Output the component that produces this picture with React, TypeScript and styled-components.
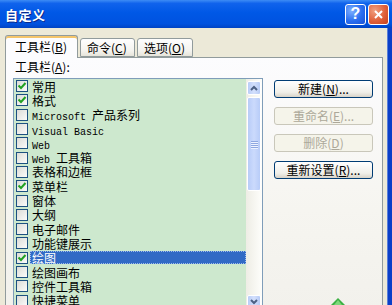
import React from "react";
import styled, { createGlobalStyle } from "styled-components";

const GlobalStyle = createGlobalStyle`
    html, body {
        margin: 0;
        padding: 0;
        overflow: hidden;
        background: #0a4fd8;
    }
`;

const UI_FONT = `"Noto Sans CJK SC", "Liberation Sans", sans-serif`;

const Window = styled.div`
    width: 392px;
    height: 305px;
    display: flex;
    flex-direction: column;
    overflow: hidden;
    position: relative;
    font-family: ${UI_FONT};
    font-size: 12px;
    color: #000;
`;

const TitleBar = styled.div`
    height: 28px;
    flex: none;
    display: flex;
    align-items: center;
    padding: 0 3px 0 5px;
    background: linear-gradient(
        #3d8cf5 0%,
        #1063ec 12%,
        #0058e6 45%,
        #0052df 85%,
        #0043c4 100%
    );
`;

const Title = styled.div`
    flex: 1;
    color: #fff;
    font-weight: bold;
    font-size: 13px;
    letter-spacing: 0.5px;
    text-shadow: 1px 1px 0 #0a2a8a;
`;

const CaptionButton = styled.div<{ $red?: boolean }>`
    width: 21px;
    height: 21px;
    box-sizing: border-box;
    margin-left: 2px;
    border: 1px solid #fff;
    border-radius: 3px;
    display: flex;
    align-items: center;
    justify-content: center;
    background: ${(p) =>
        p.$red
            ? "radial-gradient(circle at 30% 30%, #f0a080, #e0613a 55%, #c8401c)"
            : "radial-gradient(circle at 30% 30%, #7fb0ff, #2a6ef0 55%, #1a52d6)"};
    color: #fff;
    font-family: "Liberation Sans", sans-serif;
    font-weight: bold;
    font-size: 16px;
`;

const Body = styled.div`
    flex: 1;
    display: flex;
    flex-direction: column;
    background: #ece9d8;
    padding: 7px 0 0 5px;
    border-right: 4px solid #0a3fc8;
    box-shadow: inset -1px 0 0 #5a7fd8;
`;

const TabBar = styled.div`
    display: flex;
    align-items: flex-end;
    height: 22px;
    position: relative;
    z-index: 1;
`;

const Tab = styled.div<{ $active?: boolean; $w: number }>`
    width: ${(p) => p.$w}px;
    height: ${(p) => (p.$active ? 23 : 19)}px;
    box-sizing: border-box;
    margin-right: 2px;
    margin-bottom: ${(p) => (p.$active ? -1 : 0)}px;
    border: 1px solid #919b9c;
    border-bottom: ${(p) => (p.$active ? "none" : "1px solid #919b9c")};
    border-radius: 3px 3px 0 0;
    background: ${(p) =>
        p.$active ? "#fcfcfe" : "linear-gradient(#fefefe, #f4f3ee 70%, #e6e4da)"};
    box-shadow: ${(p) => (p.$active ? "inset 0 2px 0 #f5c56a" : "none")};
    padding-left: ${(p) => (p.$active ? 9 : 6)}px;
    display: flex;
    align-items: center;
    line-height: 1;
`;

const U = styled.span`
    text-decoration: underline;
`;

const Panel = styled.div`
    width: 378px;
    flex: 1;
    box-sizing: border-box;
    border: 1px solid #919b9c;
    border-bottom: none;
    background: linear-gradient(#fcfcfe, #f6f5f0 60%, #f2f1ec);
    padding: 2px 0 0 7px;
`;

const FieldLabel = styled.div`
    height: 14px;
    line-height: 14px;
    margin: 0 0 4px 2px;
`;

const Content = styled.div`
    display: flex;
    gap: 11px;
`;

const ListBox = styled.div`
    width: 250px;
    height: 232px;
    box-sizing: border-box;
    border: 1px solid #7f9db9;
    display: flex;
    background: #cde8ce;
`;

const Rows = styled.div`
    flex: 1;
`;

const Row = styled.div`
    height: 14.3px;
    display: flex;
    align-items: center;
    padding-left: 2px;
`;

const Box = styled.div`
    width: 12px;
    height: 12px;
    box-sizing: border-box;
    border: 1px solid #1c5180;
    background: linear-gradient(135deg, #dcdcd7, #fbfbfa);
    margin-right: 2px;
    display: flex;
    align-items: center;
    justify-content: center;
    flex: none;
`;

const ItemText = styled.div<{ $selected?: boolean }>`
    flex: 1;
    height: 13px;
    line-height: 13px;
    padding-left: 2px;
    white-space: nowrap;
    background: ${(p) => (p.$selected ? "#316ac5" : "transparent")};
    color: ${(p) => (p.$selected ? "#fff" : "#000")};
    outline: ${(p) => (p.$selected ? "1px dotted #9fbcec" : "none")};
    outline-offset: -1px;
`;

const Latin = styled.span`
    font-family: "Liberation Mono", monospace;
    font-size: 10px;
    white-space: pre;
`;

const ScrollBar = styled.div`
    width: 16px;
    flex: none;
    display: flex;
    flex-direction: column;
    background: linear-gradient(90deg, #eeede5, #fefefb);
    padding-top: 2px;
    box-sizing: border-box;
`;

const ScrollButton = styled.div`
    height: 14px;
    margin: 0 1px;
    box-sizing: border-box;
    border: 1px solid #fff;
    border-radius: 2px;
    background: linear-gradient(90deg, #b9cdf8, #d4e0fc 50%, #b7cbf6);
    display: flex;
    align-items: center;
    justify-content: center;
    flex: none;
`;

const Thumb = styled.div`
    height: 94px;
    margin: 2px 1px 0;
    box-sizing: border-box;
    border: 1px solid #fff;
    border-radius: 2px;
    background: linear-gradient(90deg, #b8ccf8, #cbdafc 50%, #b8ccf8);
    display: flex;
    flex-direction: column;
    align-items: center;
    justify-content: center;
    gap: 1px;
    flex: none;
`;

const Grip = styled.div`
    width: 7px;
    height: 1px;
    background: #8fa8e0;
    box-shadow: 0 1px 0 #eef3ff;
`;

const Track = styled.div`
    flex: 1;
`;

const Buttons = styled.div`
    display: flex;
    flex-direction: column;
    gap: 9px;
    margin-top: 2px;
`;

const PushButton = styled.div<{ $disabled?: boolean }>`
    width: 99px;
    height: 18px;
    box-sizing: border-box;
    border: 1px solid ${(p) => (p.$disabled ? "#c9c7ba" : "#003c74")};
    border-radius: 3px;
    background: ${(p) =>
        p.$disabled ? "#f5f4ea" : "linear-gradient(#ffffff, #f0efe9 70%, #d8d3c8)"};
    color: ${(p) => (p.$disabled ? "#aca899" : "#000")};
    display: flex;
    align-items: center;
    justify-content: center;
    line-height: 1;
`;

const Pointer = styled.svg`
    position: absolute;
    left: 331px;
    top: 298px;
`;

const items: [string, boolean][] = [
    ["常用", true],
    ["格式", true],
    ["Microsoft 产品系列", false],
    ["Visual Basic", false],
    ["Web", false],
    ["Web 工具箱", false],
    ["表格和边框", false],
    ["菜单栏", true],
    ["窗体", false],
    ["大纲", false],
    ["电子邮件", false],
    ["功能键展示", false],
    ["绘图", true],
    ["绘图画布", false],
    ["控件工具箱", false],
    ["快捷菜单", false],
];

const renderLabel = (s: string) =>
    s.split(/([A-Za-z][A-Za-z ]*)/).map((part, i) =>
        /^[A-Za-z]/.test(part) ? <Latin key={i}>{part}</Latin> : <span key={i}>{part}</span>
    );

const Check = () => (
    <svg width="10" height="10" viewBox="0 0 10 10">
        <polyline points="1.5,4.5 4,7 8.5,2" fill="none" stroke="#21a121" strokeWidth="2" />
    </svg>
);

const App = () => {
    return (
        <>
            <GlobalStyle />
            <Window>
                <TitleBar>
                    <Title>自定义</Title>
                    <CaptionButton>?</CaptionButton>
                    <CaptionButton $red>
                        <svg width="11" height="11" viewBox="0 0 11 11">
                            <path d="M2 2 L9 9 M9 2 L2 9" stroke="#fff" strokeWidth="2" />
                        </svg>
                    </CaptionButton>
                </TitleBar>
                <Body>
                    <TabBar>
                        <Tab $active $w={73}>
                            工具栏(<U>B</U>)
                        </Tab>
                        <Tab $w={55}>
                            命令(<U>C</U>)
                        </Tab>
                        <Tab $w={56}>
                            选项(<U>O</U>)
                        </Tab>
                    </TabBar>
                    <Panel>
                        <FieldLabel>
                            工具栏(<U>A</U>):
                        </FieldLabel>
                        <Content>
                            <ListBox>
                                <Rows>
                                    {items.map(([label, checked], i) => (
                                        <Row key={label}>
                                            <Box>{checked && <Check />}</Box>
                                            <ItemText $selected={i === 12}>{renderLabel(label)}</ItemText>
                                        </Row>
                                    ))}
                                </Rows>
                                <ScrollBar>
                                    <ScrollButton>
                                        <svg width="8" height="6" viewBox="0 0 8 6">
                                            <polyline points="1,5 4,2 7,5" fill="none" stroke="#4d6185" strokeWidth="2" />
                                        </svg>
                                    </ScrollButton>
                                    <Thumb>
                                        <Grip />
                                        <Grip />
                                        <Grip />
                                        <Grip />
                                    </Thumb>
                                    <Track />
                                    <ScrollButton>
                                        <svg width="8" height="6" viewBox="0 0 8 6">
                                            <polyline points="1,1 4,4 7,1" fill="none" stroke="#4d6185" strokeWidth="2" />
                                        </svg>
                                    </ScrollButton>
                                </ScrollBar>
                            </ListBox>
                            <Buttons>
                                <PushButton>
                                    新建(<U>N</U>)...
                                </PushButton>
                                <PushButton $disabled>
                                    重命名(<U>E</U>)...
                                </PushButton>
                                <PushButton $disabled>
                                    删除(<U>D</U>)
                                </PushButton>
                                <PushButton>
                                    重新设置(<U>R</U>)...
                                </PushButton>
                            </Buttons>
                        </Content>
                    </Panel>
                </Body>
                <Pointer width="14" height="8" viewBox="0 0 14 8">
                    <path d="M7 0 L14 7 L0 7 Z" fill="#3cb043" />
                    <path d="M7 2 L11 7 L3 7 Z" fill="#7ed87a" />
                </Pointer>
            </Window>
        </>
    );
};

export default App;
